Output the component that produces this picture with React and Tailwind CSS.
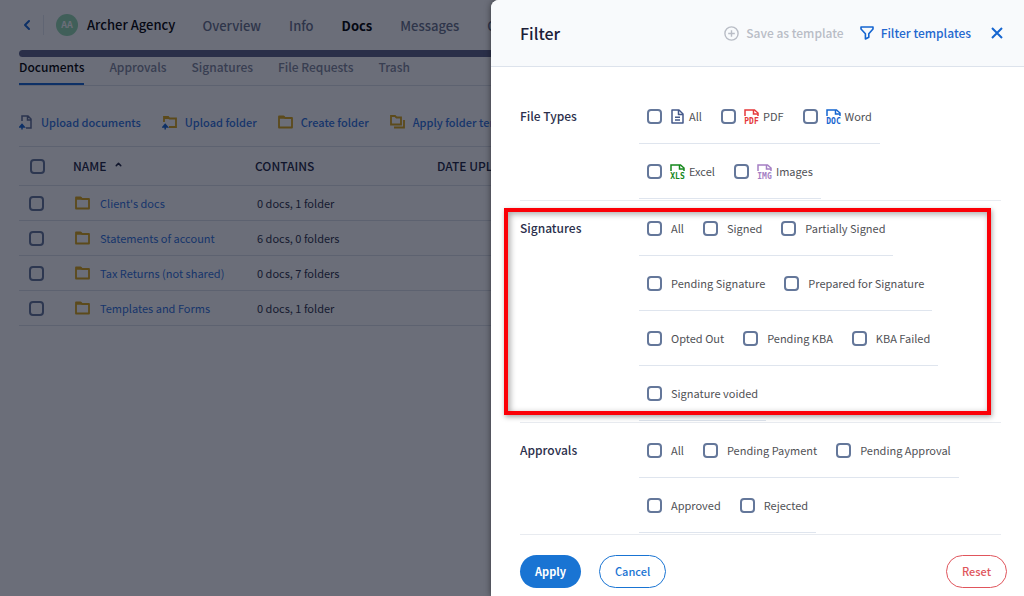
import { useState } from 'react';
import { ChevronLeft, ChevronUp } from 'lucide-react';

const NAV = ['Overview', 'Info', 'Docs', 'Messages', 'Organizers'];
const TABS = ['Documents', 'Approvals', 'Signatures', 'File Requests', 'Trash'];

const FOLDERS = [
  { name: "Client's docs", contains: '0 docs, 1 folder' },
  { name: 'Statements of account', contains: '6 docs, 0 folders' },
  { name: 'Tax Returns (not shared)', contains: '0 docs, 7 folders' },
  { name: 'Templates and Forms', contains: '0 docs, 1 folder' },
];

const FILTERS = [
  {
    title: 'File Types',
    rows: [
      [
        { label: 'All', icon: <DocIcon /> },
        { label: 'PDF', icon: <FileIcon ext="PDF" color="#e5393b" /> },
        { label: 'Word', icon: <FileIcon ext="DOC" color="#1565d0" /> },
      ],
      [
        { label: 'Excel', icon: <FileIcon ext="XLS" color="#15881c" /> },
        { label: 'Images', icon: <FileIcon ext="IMG" color="#a57fc4" /> },
      ],
    ],
  },
  {
    title: 'Signatures',
    highlighted: true,
    rows: [
      [{ label: 'All' }, { label: 'Signed' }, { label: 'Partially Signed' }],
      [{ label: 'Pending Signature' }, { label: 'Prepared for Signature' }],
      [{ label: 'Opted Out' }, { label: 'Pending KBA' }, { label: 'KBA Failed' }],
      [{ label: 'Signature voided' }],
    ],
  },
  {
    title: 'Approvals',
    rows: [
      [{ label: 'All' }, { label: 'Pending Payment' }, { label: 'Pending Approval' }],
      [{ label: 'Approved' }, { label: 'Rejected' }],
    ],
  },
];

function DocIcon() {
  return (
    <svg width="15" height="15" viewBox="0 0 15 15" fill="none" stroke="#44598a" strokeWidth="1.5" strokeLinejoin="round">
      <path d="M2 1h7l4 4v9H2z" />
      <path d="M8.5 1v4.5H13" />
      <path d="M5 8.2h5M5 11h5" />
    </svg>
  );
}

function FileIcon({ ext, color }) {
  return (
    <svg className="overflow-visible" width="15" height="15" viewBox="0 0 15 15" fill="none" stroke={color} strokeWidth="1.5">
      <path d="M1 7V1h9.5L14 4v3" />
      <path d="M9.5 1v4H14" />
      <text x="7.5" y="14.8" textAnchor="middle" fontSize="8" fontWeight="700" fill={color} stroke="none" fontFamily="'DejaVu Sans Mono', monospace">{ext}</text>
    </svg>
  );
}

function FolderIcon() {
  return (
    <svg width="15" height="14" viewBox="0 0 15 14" fill="none" stroke="#d9a514" strokeWidth="1.8" strokeLinejoin="round">
      <path d="M1 12.5V1.5h4.5L7 3h7v9.5z" />
      <path d="M1 2.5h5.5" strokeWidth="2.5" />
    </svg>
  );
}

function UploadDocIcon() {
  return (
    <svg width="14" height="15" viewBox="0 0 14 15" fill="none" strokeWidth="1.5">
      <path d="M3 6V1h6l3 3v9H7M8.5 1v4H12" stroke="#5f6f95" />
      <path d="M3 14.5V10M.8 12 3 9.5 5.2 12z" stroke="#1565d0" fill="#1565d0" />
    </svg>
  );
}

function UploadFolderIcon() {
  return (
    <svg width="15" height="15" viewBox="0 0 15 15" fill="none" strokeWidth="1.8">
      <path d="M2 7V2h4l1.5 1.5H14V12H7" stroke="#d9a514" />
      <path d="M2 2.8h5" stroke="#d9a514" strokeWidth="2.5" />
      <path d="M3.2 14.5V10M1 12l2.2-2.5L5.4 12z" stroke="#1565d0" strokeWidth="1.5" fill="#1565d0" />
    </svg>
  );
}

function FolderStackIcon() {
  return (
    <svg width="15" height="14" viewBox="0 0 15 14" fill="none" stroke="#d9a514" strokeWidth="1.8">
      <path d="M1 9.5V1h4l1.5 1.5H11v7z" />
      <path d="M4 12.5h10V5" />
    </svg>
  );
}

function Checkbox(props) {
  return (
    <input type="checkbox" {...props}
      className="block size-[15px] shrink-0 appearance-none rounded-[4px] border-2 border-[#64779a] bg-transparent checked:bg-[#1974d3]" />
  );
}

function Option({ label, icon }) {
  return (
    <label className="flex items-center text-[11px] leading-4 text-[#505156]">
      <Checkbox />
      {icon && <span className="ml-2">{icon}</span>}
      <span className={icon ? 'ml-1' : 'ml-[9px]'}>{label}</span>
    </label>
  );
}

function FilterSection({ title, rows, highlighted }) {
  return (
    <section aria-label={title} className="relative flex border-b border-[#e8ebf0] pb-px">
      <h3 className="flex h-[54px] w-[119px] shrink-0 items-center text-[12px] font-medium text-[#2b2f4c]">{title}</h3>
      <div className="flex flex-col items-start">
        {rows.map((row, i) => (
          <div key={i} className="flex h-[55px] items-center gap-[19px] border-b border-[#dfe5ee] px-2">
            {row.map(o => <Option key={o.label} {...o} />)}
          </div>
        ))}
      </div>
      {highlighted && (
        <div className="pointer-events-none absolute -left-4 right-[10px] top-[7px] bottom-[7px] border-4 border-[#fb0007] shadow-[1px_2px_5px_rgba(0,0,0,0.35),inset_2px_2px_6px_rgba(0,0,0,0.35)]" />
      )}
    </section>
  );
}

function ToolButton({ icon, children }) {
  return (
    <button className="flex items-center gap-2 whitespace-nowrap text-[11px] font-medium leading-4 text-[#2f72dc]">
      {icon}{children}
    </button>
  );
}

function DocsPage() {
  return (
    <div className="min-h-screen overflow-hidden bg-white pl-[19px]">
      {/* Client header */}
      <header className="flex h-[50px] items-center whitespace-nowrap">
        <button aria-label="Back" className="text-[#1565d0]"><ChevronLeft size={16} strokeWidth={3} /></button>
        <span className="ml-2 h-5 w-px bg-[#e4e8ef]" />
        <span className="ml-3 flex size-[22px] items-center justify-center rounded-full bg-[#94d9b0] text-[9px] font-bold text-white">AA</span>
        <h1 className="ml-[9px] text-[13px] font-medium text-black">Archer Agency</h1>
        <nav className="ml-[27px] flex gap-7 pt-0.5 text-[13px] font-medium">
          {NAV.map(n => (
            <a key={n} href="#" className={n === 'Docs' ? 'font-bold text-black' : 'text-[#68718a]'}>{n}</a>
          ))}
        </nav>
      </header>
      <div className="h-[7px] rounded-l-full bg-[#5c6288]" />

      <nav className="flex h-[29px] gap-[25px] whitespace-nowrap border-b border-[#dce1e9] text-[12px] font-medium">
        {TABS.map((t, i) => (
          <a key={t} href="#"
            className={i === 0 ? 'border-b-2 border-[#1565d0] pt-px text-black' : 'pt-px text-[#7f879b]'}>{t}</a>
        ))}
      </nav>

      <div className="flex h-[60px] items-center gap-[21px] pt-3">
        <ToolButton icon={<UploadDocIcon />}>Upload documents</ToolButton>
        <ToolButton icon={<UploadFolderIcon />}>Upload folder</ToolButton>
        <ToolButton icon={<FolderIcon />}>Create folder</ToolButton>
        <ToolButton icon={<FolderStackIcon />}>Apply folder template</ToolButton>
      </div>

      <table className="w-full border-t border-[#dce1e9] text-left text-[11px]">
        <thead>
          <tr className="h-[39px] border-b border-[#dce1e9] text-[12px] text-[#20253f]">
            <th className="w-[54px] pl-[11px]"><Checkbox aria-label="Select all" /></th>
            <th className="w-[182px] font-medium">
              <span className="flex items-center gap-2">NAME <ChevronUp className="mb-1" size={9} strokeWidth={4} /></span>
            </th>
            <th className="w-[182px] font-medium">CONTAINS</th>
            <th className="font-medium">DATE UPLOADED</th>
          </tr>
        </thead>
        <tbody>
          {FOLDERS.map(f => (
            <tr key={f.name} className="h-[35px] border-b border-[#dce1e9]">
              <td className="pl-[10px]"><Checkbox aria-label={f.name} /></td>
              <td className="pl-[2px]">
                <a href="#" className="flex items-center gap-[10px] whitespace-nowrap text-[#2f72dc]"><FolderIcon />{f.name}</a>
              </td>
              <td className="pl-[2px] text-[#2d3148]">{f.contains}</td>
              <td />
            </tr>
          ))}
        </tbody>
      </table>
    </div>
  );
}

function FilterDrawer({ onClose }) {
  return (
    <aside className="absolute inset-y-0 right-0 flex w-[533px] max-w-full flex-col overflow-hidden rounded-tl-[8px] bg-white shadow-[0_0_6px_rgba(0,0,0,0.5)]">
      <header className="flex h-[67px] shrink-0 items-center border-b border-[#dde3ec] bg-[#f8fafc] pl-[29px] pr-[21px] text-[12px] font-medium">
        <h2 className="mr-auto text-[16px] text-[#1c2038]">Filter</h2>
        <button disabled className="flex items-center gap-[7px] text-[#b9bdc6]">
          <svg width="15" height="15" viewBox="0 0 15 15" fill="none" stroke="currentColor" strokeWidth="1.4">
            <circle cx="7.5" cy="7.5" r="6.6" />
            <path d="M7.5 4.2v6.6M4.2 7.5h6.6" />
          </svg>
          Save as template
        </button>
        <button className="ml-4 flex items-center gap-[7px] text-[#2468cf]">
          <svg width="14" height="14" viewBox="0 0 14 14" fill="none" stroke="#1565d0" strokeWidth="1.6" strokeLinejoin="round">
            <path d="M1 1h12v2L8.8 7.8v3.4L5.4 13V7.8L1 3z" />
          </svg>
          Filter templates
        </button>
        <button aria-label="Close" onClick={onClose} className="ml-5">
          <svg width="12" height="12" viewBox="0 0 12 12" stroke="#1565d0" strokeWidth="2">
            <path d="M1 1l10 10M11 1L1 11" />
          </svg>
        </button>
      </header>

      <div className="pl-[29px] pr-[23px] pt-[22px]">
        {FILTERS.map(f => <FilterSection key={f.title} {...f} />)}
      </div>

      <footer className="flex gap-[18px] pl-[29px] pr-[17px] pt-5 text-[11px]">
        <button className="h-[33px] rounded-full bg-[#1974d3] px-[15px] font-bold text-white">Apply</button>
        <button className="h-[33px] rounded-full border border-[#1974d3] px-[15px] font-medium text-[#1974d3]">Cancel</button>
        <button className="ml-auto h-[33px] rounded-full border border-[#e0555c] px-[15px] font-medium text-[#e0555c]">Reset</button>
      </footer>
    </aside>
  );
}

export default function App() {
  const [open, setOpen] = useState(true);

  return (
    <div className="relative min-h-screen overflow-hidden font-['Noto_Sans_CJK_SC',sans-serif]">
      <DocsPage />
      {open && (
        <>
          <div className="absolute inset-0 bg-[#090d20]/60" />
          <FilterDrawer onClose={() => setOpen(false)} />
        </>
      )}
    </div>
  );
}
